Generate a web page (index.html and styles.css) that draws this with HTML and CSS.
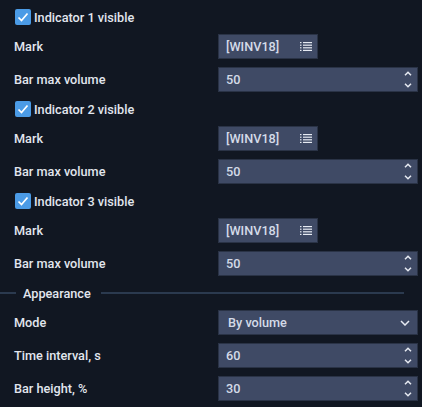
FILE: index.html
```html
<!DOCTYPE html>
<html>
<head>
<meta charset="utf-8">
<link rel="stylesheet" href="styles.css">
</head>
<body>
<div class="panel">
  <div class="check-row"><span class="check"><svg viewBox="0 0 16 16" width="16" height="16"><polyline points="3.5,8.5 6.5,11.5 12.5,4.5" fill="none" stroke="#fff" stroke-width="1.7"/></svg></span><span>Indicator 1 visible</span></div>
  <div class="label">Mark</div>
  <div class="field"><div class="box short"><span class="val">[WINV18]</span><svg class="list" viewBox="0 0 12 10" width="12" height="10"><g fill="#e6eaf2"><rect x="0" y="0" width="1.5" height="1.2"/><rect x="3" y="0" width="9" height="1.2"/><rect x="0" y="2.6" width="1.5" height="1.2"/><rect x="3" y="2.6" width="9" height="1.2"/><rect x="0" y="5.2" width="1.5" height="1.2"/><rect x="3" y="5.2" width="9" height="1.2"/><rect x="0" y="7.8" width="1.5" height="1.2"/><rect x="3" y="7.8" width="9" height="1.2"/></g></svg></div></div>
  <div class="label">Bar max volume</div>
  <div class="field"><div class="box"><span class="val">50</span><span class="spin"><svg viewBox="0 0 8 5" width="8" height="5"><polyline points="1,4.2 4,1.2 7,4.2" fill="none" stroke="#e6eaf2" stroke-width="1.5"/></svg><svg viewBox="0 0 8 5" width="8" height="5"><polyline points="1,0.8 4,3.8 7,0.8" fill="none" stroke="#e6eaf2" stroke-width="1.5"/></svg></span></div></div>

  <div class="check-row"><span class="check"><svg viewBox="0 0 16 16" width="16" height="16"><polyline points="3.5,8.5 6.5,11.5 12.5,4.5" fill="none" stroke="#fff" stroke-width="1.7"/></svg></span><span>Indicator 2 visible</span></div>
  <div class="label">Mark</div>
  <div class="field"><div class="box short"><span class="val">[WINV18]</span><svg class="list" viewBox="0 0 12 10" width="12" height="10"><g fill="#e6eaf2"><rect x="0" y="0" width="1.5" height="1.2"/><rect x="3" y="0" width="9" height="1.2"/><rect x="0" y="2.6" width="1.5" height="1.2"/><rect x="3" y="2.6" width="9" height="1.2"/><rect x="0" y="5.2" width="1.5" height="1.2"/><rect x="3" y="5.2" width="9" height="1.2"/><rect x="0" y="7.8" width="1.5" height="1.2"/><rect x="3" y="7.8" width="9" height="1.2"/></g></svg></div></div>
  <div class="label">Bar max volume</div>
  <div class="field"><div class="box"><span class="val">50</span><span class="spin"><svg viewBox="0 0 8 5" width="8" height="5"><polyline points="1,4.2 4,1.2 7,4.2" fill="none" stroke="#e6eaf2" stroke-width="1.5"/></svg><svg viewBox="0 0 8 5" width="8" height="5"><polyline points="1,0.8 4,3.8 7,0.8" fill="none" stroke="#e6eaf2" stroke-width="1.5"/></svg></span></div></div>

  <div class="check-row"><span class="check"><svg viewBox="0 0 16 16" width="16" height="16"><polyline points="3.5,8.5 6.5,11.5 12.5,4.5" fill="none" stroke="#fff" stroke-width="1.7"/></svg></span><span>Indicator 3 visible</span></div>
  <div class="label">Mark</div>
  <div class="field"><div class="box short"><span class="val">[WINV18]</span><svg class="list" viewBox="0 0 12 10" width="12" height="10"><g fill="#e6eaf2"><rect x="0" y="0" width="1.5" height="1.2"/><rect x="3" y="0" width="9" height="1.2"/><rect x="0" y="2.6" width="1.5" height="1.2"/><rect x="3" y="2.6" width="9" height="1.2"/><rect x="0" y="5.2" width="1.5" height="1.2"/><rect x="3" y="5.2" width="9" height="1.2"/><rect x="0" y="7.8" width="1.5" height="1.2"/><rect x="3" y="7.8" width="9" height="1.2"/></g></svg></div></div>
  <div class="label">Bar max volume</div>
  <div class="field"><div class="box"><span class="val">50</span><span class="spin"><svg viewBox="0 0 8 5" width="8" height="5"><polyline points="1,4.2 4,1.2 7,4.2" fill="none" stroke="#e6eaf2" stroke-width="1.5"/></svg><svg viewBox="0 0 8 5" width="8" height="5"><polyline points="1,0.8 4,3.8 7,0.8" fill="none" stroke="#e6eaf2" stroke-width="1.5"/></svg></span></div></div>

  <div class="section"><span class="line-left"></span><span class="section-title">Appearance</span><span class="line-right"></span></div>

  <div class="label">Mode</div>
  <div class="field"><div class="box select"><span class="val">By volume</span><svg class="chev" viewBox="0 0 10 6" width="10" height="6"><polyline points="1,1 5,5 9,1" fill="none" stroke="#e6eaf2" stroke-width="1.5"/></svg></div></div>
  <div class="label">Time interval, s</div>
  <div class="field"><div class="box"><span class="val">60</span><span class="spin"><svg viewBox="0 0 8 5" width="8" height="5"><polyline points="1,4.2 4,1.2 7,4.2" fill="none" stroke="#e6eaf2" stroke-width="1.5"/></svg><svg viewBox="0 0 8 5" width="8" height="5"><polyline points="1,0.8 4,3.8 7,0.8" fill="none" stroke="#e6eaf2" stroke-width="1.5"/></svg></span></div></div>
  <div class="label">Bar height, %</div>
  <div class="field"><div class="box"><span class="val">30</span><span class="spin"><svg viewBox="0 0 8 5" width="8" height="5"><polyline points="1,4.2 4,1.2 7,4.2" fill="none" stroke="#e6eaf2" stroke-width="1.5"/></svg><svg viewBox="0 0 8 5" width="8" height="5"><polyline points="1,0.8 4,3.8 7,0.8" fill="none" stroke="#e6eaf2" stroke-width="1.5"/></svg></span></div></div>
</div>
</body>
</html>
```

FILE: styles.css
```css
html, body {
  margin: 0;
  padding: 0;
  background: #111722;
}

body {
  font-family: Roboto, "Liberation Sans", sans-serif;
  font-size: 12.7px;
  font-weight: 500;
  color: #e2e6ee;
}

.panel {
  display: grid;
  grid-template-columns: 1fr 200px;
  row-gap: 8px;
  padding: 8px 4px 0 14px;
}

.check-row {
  grid-column: 1 / -1;
  height: 18px;
  display: flex;
  align-items: center;
  gap: 3px;
  padding-left: 1px;
}

.check {
  width: 16px;
  height: 16px;
  border-radius: 2px;
  background: #4b9be6;
  display: flex;
}

.label {
  height: 25px;
  display: flex;
  align-items: center;
}

.field {
  height: 25px;
}

.box {
  box-sizing: border-box;
  height: 25px;
  width: 200px;
  border: 1px solid #2a3346;
  background: #3f4a65;
  color: #d4dbe8;
  display: flex;
  align-items: center;
  padding: 0 5px 0 7px;
}

.box.short {
  width: 100px;
}

.val {
  flex: 1;
}

.list {
  margin-right: 0;
}

.spin {
  display: flex;
  flex-direction: column;
  justify-content: space-between;
  height: 17px;
}

.select .val {
  padding-left: 2px;
}

.chev {
  margin-right: 2px;
}

.section {
  grid-column: 1 / -1;
  height: 18px;
  display: flex;
  align-items: center;
  margin-left: -14px;
  margin-right: 14px;
}

.line-left {
  width: 16px;
  height: 2px;
  background: #2b3a4f;
}

.line-right {
  flex: 1;
  height: 2px;
  background: #2b3a4f;
}

.section-title {
  padding: 0 10px 0 7px;
}
```
